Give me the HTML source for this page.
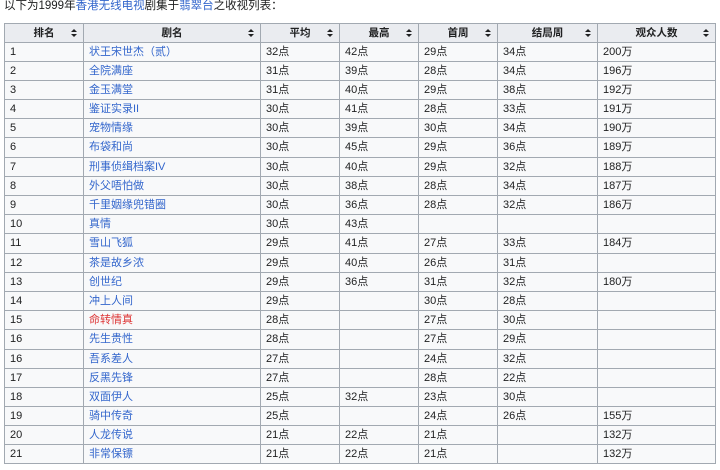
<!DOCTYPE html>
<html><head><meta charset="utf-8"><style>
body{margin:0;background:#fff;font-family:"Liberation Sans","Noto Sans CJK SC",sans-serif;font-size:11px;color:#202122;}
p{margin:0;position:absolute;left:4px;top:-2px;font-size:11.5px;line-height:16px}
a{color:#3366cc;text-decoration:none}
a.new{color:#d33}
table{position:absolute;left:4px;top:23px;border-collapse:collapse;background:#f8f9fa;width:712px;table-layout:fixed}
tr{height:19px}
tr.h{height:19px}
tr.t{height:20px}
th,td{border:1px solid #a2a9b1;padding:0 5px;height:auto;line-height:13px;white-space:nowrap;overflow:hidden;box-sizing:border-box}
th{background:#eaecf0;font-weight:bold;position:relative;text-align:center;font-size:10.5px}
th:after{content:"";position:absolute;right:6px;top:5px;width:0;height:0;border-left:3px solid transparent;border-right:3px solid transparent;border-bottom:3px solid #202122}
th:before{content:"";position:absolute;right:6px;top:10px;width:0;height:0;border-left:3px solid transparent;border-right:3px solid transparent;border-top:3px solid #202122}
</style></head><body>
<p>以下为1999年<a>香港无线电视</a>剧集于<a>翡翠台</a>之收视列表：</p>
<table>
<colgroup><col style="width:79px"><col style="width:177px"><col style="width:79px"><col style="width:79px"><col style="width:79px"><col style="width:100px"><col></colgroup>
<tr class="h"><th>排名</th><th>剧名</th><th>平均</th><th>最高</th><th>首周</th><th>结局周</th><th>观众人数</th></tr>
<tr><td>1</td><td><a>状王宋世杰（贰）</a></td><td>32点</td><td>42点</td><td>29点</td><td>34点</td><td>200万</td></tr>
<tr><td>2</td><td><a>全院满座</a></td><td>31点</td><td>39点</td><td>28点</td><td>34点</td><td>196万</td></tr>
<tr><td>3</td><td><a>金玉满堂</a></td><td>31点</td><td>40点</td><td>29点</td><td>38点</td><td>192万</td></tr>
<tr><td>4</td><td><a>鉴证实录II</a></td><td>30点</td><td>41点</td><td>28点</td><td>33点</td><td>191万</td></tr>
<tr><td>5</td><td><a>宠物情缘</a></td><td>30点</td><td>39点</td><td>30点</td><td>34点</td><td>190万</td></tr>
<tr class="t"><td>6</td><td><a>布袋和尚</a></td><td>30点</td><td>45点</td><td>29点</td><td>36点</td><td>189万</td></tr>
<tr><td>7</td><td><a>刑事侦缉档案IV</a></td><td>30点</td><td>40点</td><td>29点</td><td>32点</td><td>188万</td></tr>
<tr><td>8</td><td><a>外父唔怕做</a></td><td>30点</td><td>38点</td><td>28点</td><td>34点</td><td>187万</td></tr>
<tr><td>9</td><td><a>千里姻缘兜错圈</a></td><td>30点</td><td>36点</td><td>28点</td><td>32点</td><td>186万</td></tr>
<tr><td>10</td><td><a>真情</a></td><td>30点</td><td>43点</td><td></td><td></td><td></td></tr>
<tr class="t"><td>11</td><td><a>雪山飞狐</a></td><td>29点</td><td>41点</td><td>27点</td><td>33点</td><td>184万</td></tr>
<tr><td>12</td><td><a>茶是故乡浓</a></td><td>29点</td><td>40点</td><td>26点</td><td>31点</td><td></td></tr>
<tr><td>13</td><td><a>创世纪</a></td><td>29点</td><td>36点</td><td>31点</td><td>32点</td><td>180万</td></tr>
<tr><td>14</td><td><a>冲上人间</a></td><td>29点</td><td></td><td>30点</td><td>28点</td><td></td></tr>
<tr><td>15</td><td><a class="new">命转情真</a></td><td>28点</td><td></td><td>27点</td><td>30点</td><td></td></tr>
<tr class="t"><td>16</td><td><a>先生贵性</a></td><td>28点</td><td></td><td>27点</td><td>29点</td><td></td></tr>
<tr><td>16</td><td><a>吾系差人</a></td><td>27点</td><td></td><td>24点</td><td>32点</td><td></td></tr>
<tr><td>17</td><td><a>反黑先锋</a></td><td>27点</td><td></td><td>28点</td><td>22点</td><td></td></tr>
<tr><td>18</td><td><a>双面伊人</a></td><td>25点</td><td>32点</td><td>23点</td><td>30点</td><td></td></tr>
<tr><td>19</td><td><a>骑中传奇</a></td><td>25点</td><td></td><td>24点</td><td>26点</td><td>155万</td></tr>
<tr><td>20</td><td><a>人龙传说</a></td><td>21点</td><td>22点</td><td>21点</td><td></td><td>132万</td></tr>
<tr><td>21</td><td><a>非常保镖</a></td><td>21点</td><td>22点</td><td>21点</td><td></td><td>132万</td></tr>
</table>
</body></html>
